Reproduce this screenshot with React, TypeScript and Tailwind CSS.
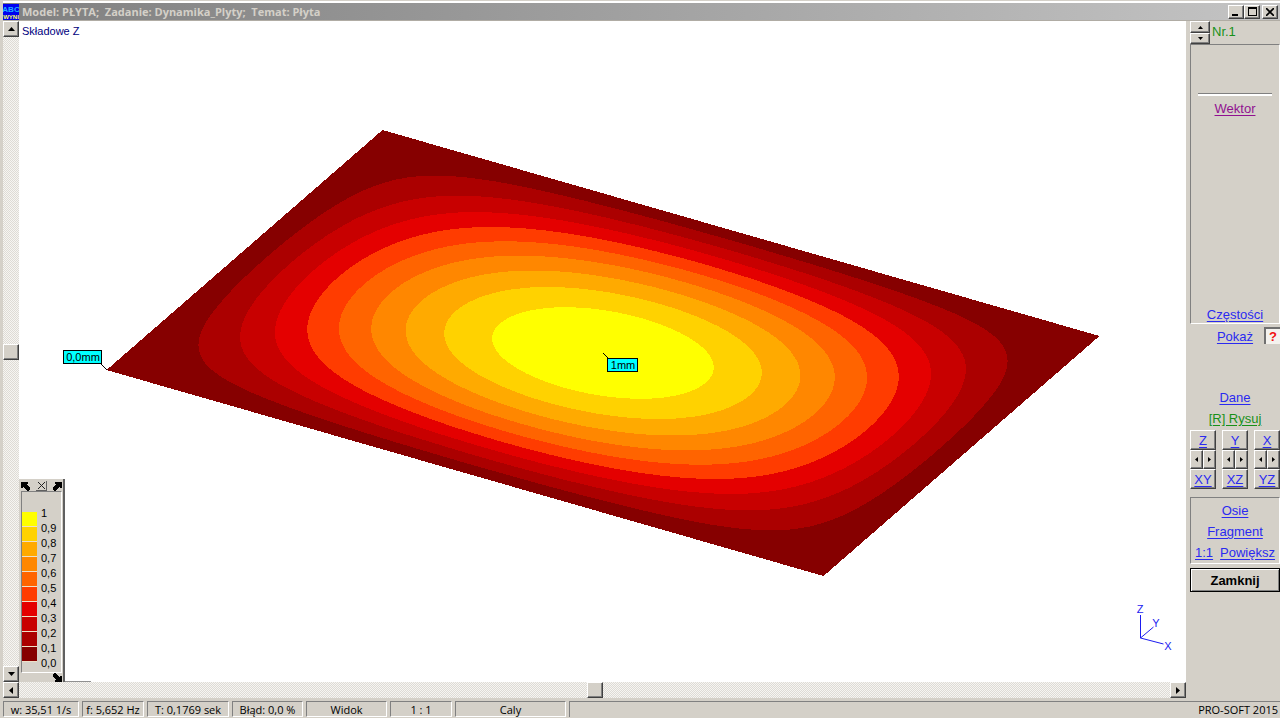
/**
 * Result viewer - plate dynamics
 *
 * Shows the Z components of a vibration mode as a contour map,
 * with the colour legend, the tool panel and the status bar.
 */

import React from "react";

type Point = [number, number];

// --- Plate geometry (canvas coordinates) ---
const CENTER: Point = [603, 353];
const LONG_SIDE: Point = [717, 206];
const SHORT_SIDE: Point = [276, -240];

const BASE_COLOR = "#860000";

// One band per tenth of the largest deflection, lowest first
const BANDS = [
  { level: 0.1, color: "#ab0000" },
  { level: 0.2, color: "#c80000" },
  { level: 0.3, color: "#e40000" },
  { level: 0.4, color: "#ff3c00" },
  { level: 0.5, color: "#ff6400" },
  { level: 0.6, color: "#ff8700" },
  { level: 0.7, color: "#ffaa00" },
  { level: 0.8, color: "#ffd200" },
  { level: 0.9, color: "#ffff00" },
];

const LEGEND = [
  { label: "0,9", swatch: "bg-[#ffff00]" },
  { label: "0,8", swatch: "bg-[#ffd200]" },
  { label: "0,7", swatch: "bg-[#ffaa00]" },
  { label: "0,6", swatch: "bg-[#ff8700]" },
  { label: "0,5", swatch: "bg-[#ff6400]" },
  { label: "0,4", swatch: "bg-[#ff3c00]" },
  { label: "0,3", swatch: "bg-[#e40000]" },
  { label: "0,2", swatch: "bg-[#c80000]" },
  { label: "0,1", swatch: "bg-[#ab0000]" },
  { label: "0,0", swatch: "bg-[#860000]" },
];

const STATUS = [
  { text: "w: 35,51 1/s", width: "w-[76px]" },
  { text: "f: 5,652 Hz", width: "w-[62px]" },
  { text: "T: 0,1769 sek", width: "w-[82px]" },
  { text: "Błąd: 0,0 %", width: "w-[71px]" },
  { text: "Widok", width: "w-[81px]" },
  { text: "1 : 1", width: "w-[62px]" },
  { text: "Caly", width: "w-[111px]" },
];

const VIEWS = [
  { axis: "Z", plane: "XY" },
  { axis: "Y", plane: "XZ" },
  { axis: "X", plane: "YZ" },
];

const RAISED =
  "flex items-center justify-center bg-[#d4d0c8] border border-t-white border-l-white border-r-[#404040] border-b-[#404040] shadow-[inset_-1px_-1px_0_#808080]";
const SUNKEN =
  "border border-t-[#808080] border-l-[#808080] border-r-white border-b-white";
const TRACK =
  "bg-[#eae8e3] bg-[repeating-conic-gradient(#f6f5f2_0_25%,#dedbd5_0_50%)] bg-[length:2px_2px]";

const toPoint = (a: number, b: number): Point => [
  CENTER[0] + a * LONG_SIDE[0] + b * SHORT_SIDE[0],
  CENTER[1] + a * LONG_SIDE[1] + b * SHORT_SIDE[1],
];

const toPoints = (points: Point[]) =>
  points.map(([x, y]) => `${x.toFixed(1)},${y.toFixed(1)}`).join(" ");

/**
 * Contour of cos(pi a) * cos(pi b) = level, found by bisection along each ray
 */
function contour(level: number): string {
  const points: Point[] = [];
  for (let i = 0; i < 180; i++) {
    const t = (i * Math.PI) / 90;
    const ca = Math.cos(t);
    const cb = Math.sin(t);
    let low = 0;
    let high = 0.5 / Math.max(Math.abs(ca), Math.abs(cb));
    for (let k = 0; k < 24; k++) {
      const r = (low + high) / 2;
      const w = Math.cos(Math.PI * r * ca) * Math.cos(Math.PI * r * cb);
      if (w > level) low = r;
      else high = r;
    }
    points.push(toPoint(low * ca, low * cb));
  }
  return toPoints(points);
}

const PLATE = toPoints([
  toPoint(-0.5, -0.5),
  toPoint(-0.5, 0.5),
  toPoint(0.5, 0.5),
  toPoint(0.5, -0.5),
]);

const ARROWS = {
  up: "0,4 7,4 3.5,0",
  down: "0,0 7,0 3.5,4",
  left: "4,0 4,7 0,3.5",
  right: "0,0 0,7 4,3.5",
};

const Arrow: React.FC<{ dir: keyof typeof ARROWS; small?: boolean }> = ({
  dir,
  small,
}) => {
  const upright = dir === "up" || dir === "down";
  const w = upright ? 7 : 4;
  const h = upright ? 4 : 7;
  return (
    <svg
      width={small ? w - (upright ? 2 : 1) : w}
      height={small ? h - (upright ? 1 : 2) : h}
      viewBox={`0 0 ${w} ${h}`}
      preserveAspectRatio="none"
      className="shrink-0"
    >
      <polygon points={ARROWS[dir]} />
    </svg>
  );
};

const CornerArrow: React.FC<{ className?: string }> = ({ className }) => (
  <svg
    width="9"
    height="9"
    viewBox="0 0 9 9"
    shapeRendering="crispEdges"
    className={className}
  >
    <path d="M0 0h7v2h-1v1h1v1h1v1h1v3h-1v1h-2v-1h-1v-1h-1v-1h-1v-1h-1v1h-2z" />
  </svg>
);

const Tool: React.FC<{ color?: string; children: React.ReactNode }> = ({
  color = "text-[#2a2af0]",
  children,
}) => (
  <a href="#" className={`underline underline-offset-2 ${color}`}>
    {children}
  </a>
);

/** Contour map with value labels and the axis cross */
const Plot: React.FC = () => (
  <svg
    viewBox="19 21 1167 661"
    className="block w-full"
    fontFamily="Liberation Sans, Arial, sans-serif"
    fontSize="11"
  >
    <g shapeRendering="crispEdges">
      <polygon points={PLATE} fill={BASE_COLOR} />
      {BANDS.map((band) => (
        <polygon
          key={band.level}
          points={contour(band.level)}
          fill={band.color}
        />
      ))}
    </g>

    <g stroke="#000" fill="#00ffff">
      <path d="M101 364l6 6M603 353l5 5" />
      <rect x="63.5" y="350.5" width="38" height="13" />
      <rect x="607.5" y="358.5" width="30" height="13" />
    </g>
    <text x="83" y="361" textAnchor="middle">
      0,0mm
    </text>
    <text x="623" y="369" textAnchor="middle">
      1mm
    </text>

    <path
      d="M1140.5 615v23l13-11M1140.5 638l23 6"
      fill="none"
      stroke="#1c1cf0"
    />
    <g fill="#1c1cf0" textAnchor="middle">
      <text x="1140" y="613">
        Z
      </text>
      <text x="1156" y="627">
        Y
      </text>
      <text x="1168" y="650">
        X
      </text>
    </g>
  </svg>
);

const Legend: React.FC = () => (
  <div className="absolute bottom-0 left-0 w-[46px] h-[203px] flex flex-col bg-[#d4d0c8] border-r-2 border-r-[#606060] pl-0.5 pr-px pt-0.5 text-[11px]">
    <div className="flex items-center justify-between h-[10px]">
      <CornerArrow />
      <button
        aria-label="Zamknij legendę"
        className="w-[11px] h-[10px] flex items-center justify-center border-r border-b border-[#606060]"
      >
        <svg width="7" height="7" viewBox="0 0 7 7">
          <path d="M0 0l7 7M7 0L0 7" stroke="#222" />
        </svg>
      </button>
      <CornerArrow className="-scale-x-100" />
    </div>
    <div className="flex flex-1 pt-5 border border-[#808080] border-r-white border-b-white">
      <div className="w-[15px]">
        {LEGEND.map((item) => (
          <div
            key={item.label}
            className={`h-[15px] border-b border-[#efe0c8] ${item.swatch}`}
          />
        ))}
      </div>
      <ul className="pl-1 -mt-1.5 leading-[15px]">
        <li>1</li>
        {LEGEND.map((item) => (
          <li key={item.label}>{item.label}</li>
        ))}
      </ul>
    </div>
    <CornerArrow className="self-end rotate-180" />
  </div>
);

const ToolPanel: React.FC = () => (
  <aside className="w-[94px] shrink-0 pl-1 flex flex-col text-[13px] leading-[21px] text-center">
    <div className="flex h-[23px]">
      <div className="w-5 flex flex-col">
        <button aria-label="Następny" className={`h-3 ${RAISED}`}>
          <Arrow dir="up" small />
        </button>
        <button aria-label="Poprzedni" className={`h-[11px] ${RAISED}`}>
          <Arrow dir="down" small />
        </button>
      </div>
      <span className="pl-0.5 text-[#189018]">Nr.1</span>
    </div>

    <div className={`h-[280px] flex flex-col ${SUNKEN}`}>
      <div className="mx-[7px] mt-12 mb-0.5 h-[3px] border-t border-t-[#808080] border-b-2 border-b-white" />
      <Tool color="text-[#901090]">Wektor</Tool>
      <div className="mt-auto -mb-0.5">
        <Tool>Częstości</Tool>
      </div>
    </div>

    <div className="grid grid-cols-[1fr_auto_1fr] pt-0.5">
      <span />
      <Tool>Pokaż</Tool>
      <button className="justify-self-end w-4 h-[17px] mt-px bg-[#f4f2ee] text-[#f01010] text-[13px] leading-4 font-bold border-t-2 border-l-2 border-[#707070]">
        ?
      </button>
    </div>

    <div className="mt-10 flex flex-col">
      <Tool>Dane</Tool>
      <Tool color="text-[#189018]">[R] Rysuj</Tool>
    </div>

    <div className="flex justify-between mt-px">
      {VIEWS.map((view) => (
        <div key={view.axis} className="w-[26px] flex flex-col">
          <button
            className={`h-5 text-[#2a2af0] underline underline-offset-2 ${RAISED}`}
          >
            {view.axis}
          </button>
          <div className="flex">
            <button
              aria-label={`Obrót ${view.axis} w lewo`}
              className={`flex-1 h-[19px] ${RAISED}`}
            >
              <Arrow dir="left" small />
            </button>
            <button
              aria-label={`Obrót ${view.axis} w prawo`}
              className={`flex-1 h-[19px] ${RAISED}`}
            >
              <Arrow dir="right" small />
            </button>
          </div>
          <button
            className={`h-5 text-[#2a2af0] underline underline-offset-2 ${RAISED}`}
          >
            {view.plane}
          </button>
        </div>
      ))}
    </div>

    <div className={`flex flex-col mt-2 pt-0.5 ${SUNKEN}`}>
      <Tool>Osie</Tool>
      <Tool>Fragment</Tool>
      <div className="flex justify-between px-1">
        <Tool>1:1</Tool>
        <Tool>Powiększ</Tool>
      </div>
    </div>

    <button className="h-6 mt-1 font-bold border border-black shadow-[inset_1px_1px_0_#fff,inset_-1px_-1px_0_#808080]">
      Zamknij
    </button>
  </aside>
);

const App: React.FC = () => (
  <div className="min-h-screen flex flex-col bg-[#d4d0c8] pl-[3px] pt-[3px] font-['Liberation_Sans',Arial,sans-serif] text-black overflow-hidden">
    {/* --- Title bar --- */}
    <header className="flex items-center h-[18px] pr-[2px] bg-gradient-to-r from-[#808080] to-[#c4c4c4] shadow-[0_-2px_0_#fff] border-b border-b-[#b0aca4]">
      <svg width="16" height="16" viewBox="0 0 16 16" aria-hidden="true">
        <rect width="16" height="16" fill="#0000f0" />
        <text
          x="8"
          y="8"
          textAnchor="middle"
          fontSize="8"
          fontWeight="bold"
          fontFamily="Liberation Sans Narrow, Liberation Sans, sans-serif"
          fill="#20b0ff"
        >
          ABC
        </text>
        <text
          x="8"
          y="15"
          textAnchor="middle"
          fontSize="6"
          fontWeight="bold"
          fontFamily="Liberation Sans Narrow, Liberation Sans, sans-serif"
          fill="#ffff60"
        >
          WYNI
        </text>
      </svg>
      <h1 className="pl-[3px] flex-1 whitespace-pre text-[11px] leading-4 font-bold text-[#d4d0c8] font-['Open_Sans','Noto_Sans',sans-serif]">
        {"Model: PŁYTA;  Zadanie: Dynamika_Plyty;  Temat: Płyta"}
      </h1>
      <div className="flex h-[14px]">
        <button aria-label="Minimalizuj" className={`w-4 ${RAISED}`}>
          <svg width="8" height="8" viewBox="0 0 8 8">
            <path d="M0 6h6v2H0z" />
          </svg>
        </button>
        <button aria-label="Maksymalizuj" className={`w-4 ${RAISED}`}>
          <svg width="9" height="9" viewBox="0 0 9 9">
            <path d="M0 0h9v9H0zM1 2v6h7V2z" fillRule="evenodd" />
          </svg>
        </button>
        <button aria-label="Zamknij okno" className={`w-4 ml-0.5 ${RAISED}`}>
          <svg width="8" height="8" viewBox="0 0 8 8">
            <path d="M0 0l8 8M8 0L0 8" stroke="#000" strokeWidth="1.6" />
          </svg>
        </button>
      </div>
    </header>

    {/* --- Work area --- */}
    <div className="flex flex-1">
      <main className="flex-1 flex flex-col min-w-0">
        <div className="flex flex-1">
          <div className={`w-4 shrink-0 flex flex-col justify-between ${TRACK}`}>
            <button aria-label="W górę" className={`h-4 ${RAISED}`}>
              <Arrow dir="up" />
            </button>
            <button aria-label="Suwak pionowy" className={`h-4 ${RAISED}`} />
            <button aria-label="W dół" className={`h-4 ${RAISED}`}>
              <Arrow dir="down" />
            </button>
          </div>
          <div className="relative flex-1 bg-white">
            <Plot />
            <p className="absolute top-0.5 left-[3px] text-[11px] leading-4 text-[#000080]">
              Składowe Z
            </p>
            <div className="absolute bottom-0 left-0 w-[72px] h-px bg-[#909090]" />
            <Legend />
          </div>
        </div>
        <div className={`h-4 flex justify-between ${TRACK}`}>
          <button aria-label="W lewo" className={`w-4 ${RAISED}`}>
            <Arrow dir="left" />
          </button>
          <button aria-label="Suwak poziomy" className={`w-4 ${RAISED}`} />
          <button aria-label="W prawo" className={`w-4 ${RAISED}`}>
            <Arrow dir="right" />
          </button>
        </div>
      </main>
      <ToolPanel />
    </div>

    {/* --- Status bar --- */}
    <footer className="flex gap-[3px] h-[20px] pt-[3px] pb-px text-[11px] leading-4 text-center whitespace-nowrap font-['Open_Sans','Noto_Sans',sans-serif]">
      {STATUS.map((cell) => (
        <div key={cell.text} className={`shrink-0 ${cell.width} ${SUNKEN}`}>
          {cell.text}
        </div>
      ))}
      <div className="flex-1 pr-0.5 text-right border-t border-l border-[#808080]">
        PRO-SOFT 2015
      </div>
    </footer>
  </div>
);

export default App;
